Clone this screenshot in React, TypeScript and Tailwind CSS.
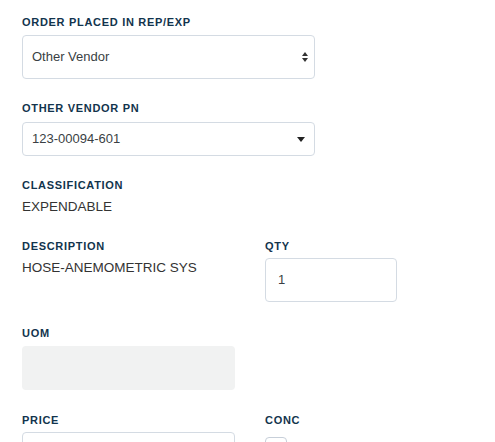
import React from "react";

const label = "block text-[11px] font-bold uppercase tracking-[0.7px] text-[#12344d] leading-[14px]";

export default function App() {
  return (
    <div className="w-[495px] h-[442px] overflow-hidden bg-white pl-[22px] pt-[15px] font-['Liberation_Sans',Arial,sans-serif]">
      <div className="w-[293px]">
        <span className={label}>Order Placed in REP/EXP</span>
        <div className="mt-[6px] h-[44px] rounded-[4px] border border-[#d4dbe3] flex items-center justify-between pl-[9px] pr-[6px]">
          <span className="text-[13px] text-[#3a3f44]">Other Vendor</span>
          <svg width="6" height="10" viewBox="0 0 6 10"><path d="M3 0 L6 4 L0 4 Z M0 6 L6 6 L3 10 Z" fill="#333" /></svg>
        </div>
      </div>
      <div className="w-[293px] mt-[22px]">
        <span className={label}>Other Vendor PN</span>
        <div className="mt-[7px] h-[34px] rounded-[4px] border border-[#d4dbe3] flex items-center justify-between pl-[9px] pr-[9px]">
          <span className="text-[13px] text-[#3a3f44]">123-00094-601</span>
          <svg width="8" height="5" viewBox="0 0 8 5"><path d="M0 0 L8 0 L4 5 Z" fill="#222" /></svg>
        </div>
      </div>
      <div className="mt-[22px]">
        <span className={label}>Classification</span>
        <div className="mt-[7px] text-[13.5px] text-[#333] leading-[15px]">EXPENDABLE</div>
      </div>
      <div className="mt-[25px] flex">
        <div className="w-[243px]">
          <span className={label}>Description</span>
          <div className="mt-[7px] text-[13.5px] text-[#333] leading-[15px]">HOSE-ANEMOMETRIC SYS</div>
        </div>
        <div className="w-[132px]">
          <span className={label}>QTY</span>
          <div className="mt-[5px] h-[44px] rounded-[4px] border border-[#d4dbe3] flex items-center pl-[12px]">
            <span className="text-[13px] text-[#3a3f44]">1</span>
          </div>
        </div>
      </div>
      <div className="mt-[24px]">
        <span className={label}>UOM</span>
        <div className="mt-[6px] w-[213px] h-[44px] rounded-[4px] bg-[#f1f2f2]" />
      </div>
      <div className="mt-[23px] flex">
        <div className="w-[243px]">
          <span className={label}>Price</span>
          <div className="mt-[5px] w-[213px] h-[40px] rounded-[4px] border border-[#d4dbe3]" />
        </div>
        <div>
          <span className={label}>Conc</span>
          <div className="mt-[10px] w-[22px] h-[22px] rounded-[4px] border border-[#c7cfd9]" />
        </div>
      </div>
    </div>
  );
}
